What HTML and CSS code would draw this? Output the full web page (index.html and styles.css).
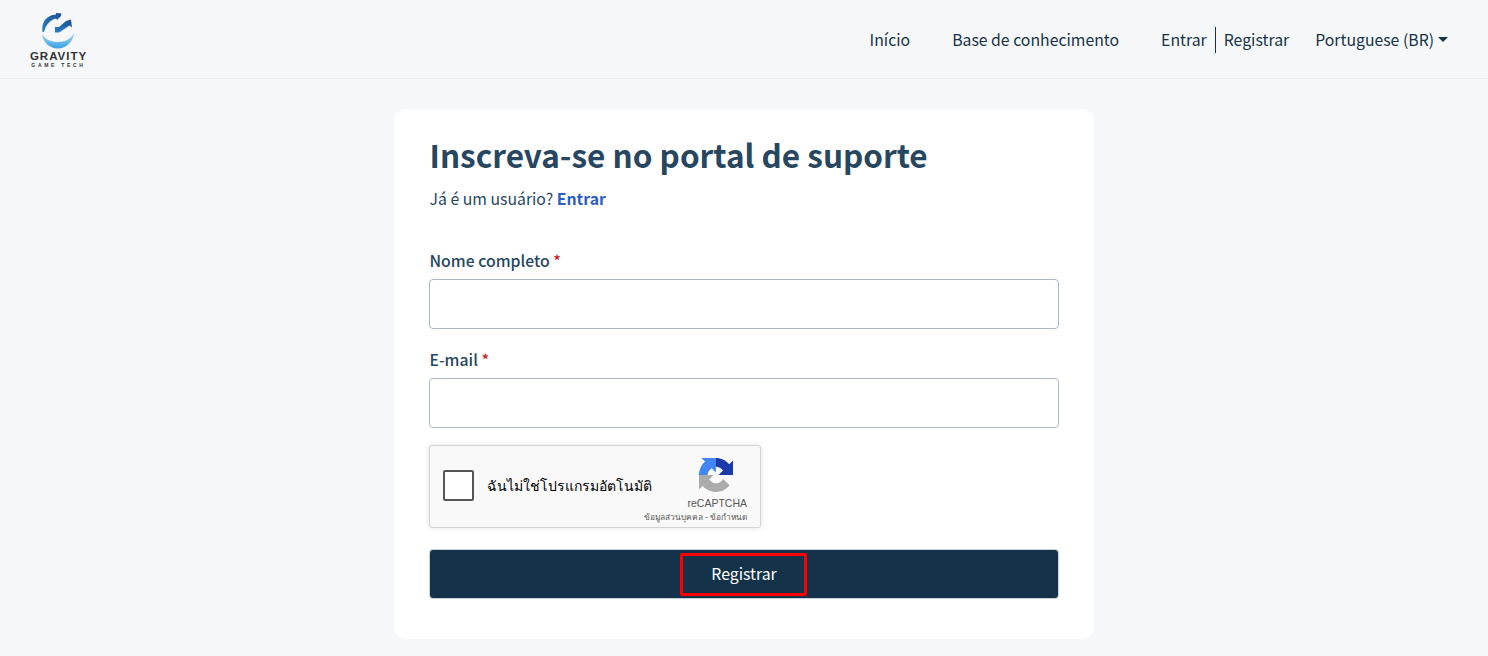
FILE: index.html
```html
<!DOCTYPE html>
<html lang="pt-BR">
<head>
<meta charset="utf-8">
<title>Inscreva-se no portal de suporte</title>
<link rel="stylesheet" href="styles.css">
</head>
<body>
<header class="topbar">
  <a class="brand" href="#">
    <svg class="brand-mark" width="40" height="38" viewBox="40 12 40 38" aria-hidden="true">
      <defs>
        <linearGradient id="bowl" x1="0" y1="0" x2="0" y2="1"><stop offset="0" stop-color="#a8dcf7"/><stop offset="1" stop-color="#3a9fe2"/></linearGradient>
        <linearGradient id="ring" x1="0" y1="1" x2="1" y2="0"><stop offset="0" stop-color="#2a7fc8"/><stop offset="1" stop-color="#1a4f92"/></linearGradient>
      </defs>
      <path d="M43 35C47 41 52 43 59 43C66 43 72 40 75.500 33.500C74 43 67 49.500 59 49.500C50 49.500 44 43 43 35Z" fill="url(#bowl)"/>
      <path d="M43.500 33C42 24 47 16 57 15.500L57 14L62.500 14.500L62 17L58 21L57 19.500C52 20.500 47 25 45 33Z" fill="url(#ring)"/>
      <path d="M56 33.500L56 28L60 28L67 22L72 20.500L73 28.500L70.500 26.500L60 33.500Z" fill="url(#ring)"/>
    </svg>
    <span class="brand-name">GRAVITY</span>
    <span class="brand-sub">GAME TECH</span>
  </a>
  <nav class="nav">
    <a class="nav-link" href="#">Início</a>
    <a class="nav-link" href="#">Base de conhecimento</a>
    <div class="auth">
      <a class="auth-link auth-entrar" href="#">Entrar</a>
      <a class="auth-link auth-registrar" href="#">Registrar</a>
    </div>
    <a class="lang" href="#">Portuguese (BR)<span class="caret"></span></a>
  </nav>
</header>

<main class="page">
  <section class="card">
    <h1 class="title">Inscreva-se no portal de suporte</h1>
    <p class="subtitle">Já é um usuário? <a class="subtitle-link" href="#">Entrar</a></p>
    <form class="form">
      <div class="field">
        <label class="label" for="nome">Nome completo <span class="req">*</span></label>
        <input class="input" id="nome" type="text">
      </div>
      <div class="field">
        <label class="label" for="email">E-mail <span class="req">*</span></label>
        <input class="input" id="email" type="text">
      </div>
      <div class="captcha">
        <span class="captcha-box"></span>
        <span class="captcha-text">ฉันไม่ใช่โปรแกรมอัตโนมัติ</span>
        <div class="captcha-brand">
          <svg class="captcha-logo" width="34" height="34" viewBox="0 0 64 64" aria-hidden="true">
            <path d="M64 31.955l-.033-1.37V4.687l-7.16 7.16C50.948 4.674 42.033.093 32.05.093c-10.400 0-19.622 4.960-25.458 12.640l11.736 11.860c1.150-2.127 2.784-3.954 4.758-5.338 2.050-1.600 4.953-2.910 8.963-2.910.484 0 .858.057 1.133.163 4.977.393 9.292 3.140 11.830 7.124l-8.306 8.307 32.293.015" fill="#1c3aa9"/>
            <path d="M31.862.002l-1.370.033H4.594l7.160 7.160C4.580 13.054-.001 21.970-.001 31.953c0 10.400 4.960 19.622 12.640 25.458l11.860-11.736c-2.127-1.150-3.954-2.784-5.338-4.758-1.600-2.050-2.910-4.953-2.910-8.963 0-.484.057-.858.163-1.133.393-4.977 3.140-9.292 7.124-11.830l8.307 8.306.015-32.293" fill="#4285f4"/>
            <path d="M.002 31.953l.033 1.370v25.898l7.160-7.160c5.860 7.173 14.775 11.754 24.760 11.754 10.400 0 19.622-4.960 25.458-12.640l-11.736-11.860c-1.150 2.127-2.784 3.954-4.758 5.338-2.050 1.600-4.953 2.910-8.963 2.910-.484 0-.858-.057-1.133-.163-4.977-.393-9.292-3.140-11.830-7.124l8.306-8.307-32.293-.015" fill="#ababab"/>
          </svg>
          <span class="captcha-name">reCAPTCHA</span>
          <span class="captcha-terms">ข้อมูลส่วนบุคคล - ข้อกำหนด</span>
        </div>
      </div>
      <button class="submit" type="button"><span class="submit-label">Registrar</span></button>
    </form>
  </section>
</main>
</body>
</html>
```
FILE: styles.css
```css
* { box-sizing: border-box; }
html, body { margin: 0; padding: 0; }
body {
  background: #f5f7f9;
  color: #183247;
  font-family: "Noto Sans CJK SC", "Noto Sans", sans-serif;
  font-size: 15.8px;
  line-height: 24px;
  overflow: hidden;
  height: 656px;
}
a { color: inherit; text-decoration: none; }

.topbar {
  height: 79px;
  border-bottom: 1px solid #ebeff3;
  display: flex;
  align-items: center;
  justify-content: space-between;
  padding: 0 40px 0 30px;
}
.brand { display: flex; flex-direction: column; align-items: center; width: 57px; color: #333; }
.brand-mark { display: block; }
.brand-name { font-family: "Liberation Sans", sans-serif; font-weight: 700; font-size: 11.5px; line-height: 10px; letter-spacing: 1px; margin-top: 2px; white-space: nowrap; }
.brand-sub { font-family: "Liberation Sans", sans-serif; font-weight: 700; font-size: 5px; line-height: 6px; letter-spacing: 2.7px; margin-top: 1px; white-space: nowrap; }

.nav { display: flex; align-items: center; margin-top: 1px; }
.nav-link { margin-right: 42px; }
.auth { display: flex; align-items: center; margin-right: 26px; }
.auth-link { display: block; line-height: 26px; }
.auth-entrar { padding-right: 8px; border-right: 1px solid #183247; }
.auth-registrar { padding-left: 8px; }
.lang { display: flex; align-items: center; }
.caret { width: 0; height: 0; margin-left: 4px; border-left: 5px solid transparent; border-right: 5px solid transparent; border-top: 5px solid #183247; }

.page { display: flex; justify-content: center; padding-top: 30px; }
.card {
  width: 700px;
  height: 530px;
  background: #fff;
  border-radius: 12px;
  padding: 23px 35px 0;
}
.title { margin: 0; padding-left: .5px; font-size: 31.500px; line-height: 44px; font-weight: 700; color: #27465f; }
.subtitle { margin: 11px 0 0; padding-left: .5px; line-height: 24px; color: #27465f; }
.subtitle-link { color: #2c5cc5; font-weight: 700; }
.form { margin-top: 38px; }
.field { margin-bottom: 19px; }
.label { display: block; padding-left: .5px; font-weight: 500; line-height: 24px; margin-bottom: 6px; color: #27465f; }
.req { color: #c82124; }
.input { display: block; width: 630px; height: 50px; border: 1px solid #a9b7c6; border-radius: 4px; background: #fff; padding: 0 12px; font: inherit; outline: none; }

.captcha {
  width: 332px;
  height: 83px;
  margin-top: -2px;
  background: #f9f9f9;
  border: 1px solid #d3d3d3;
  border-radius: 3px;
  box-shadow: 0 0 4px 1px rgba(0,0,0,.08);
  display: flex;
  align-items: center;
  padding-left: 13px;
}
.captcha-box { width: 31px; height: 31px; background: #fff; border: 2px solid #555; border-radius: 2px; flex: none; margin-bottom: 3px; }
.captcha-text { flex: 1; min-width: 0; margin-left: 13px; font-family: "Liberation Sans", "Noto Sans", sans-serif; font-size: 14px; color: #000; margin-bottom: 1px; white-space: nowrap; }
.captcha-brand { flex: none; width: 104px; margin-right: 13px; margin-top: 8px; display: flex; flex-direction: column; align-items: flex-end; }
.captcha-logo { display: block; margin: 0 14px 4px 0; }
.captcha-name { font-family: "Liberation Sans", sans-serif; font-size: 10.500px; line-height: 14px; color: #555; }
.captcha-terms { font-family: "Liberation Sans", sans-serif; font-size: 8.300px; line-height: 12px; color: #555; white-space: nowrap; margin-top: 1px; }

.submit {
  display: flex;
  align-items: center;
  justify-content: center;
  width: 630px;
  height: 50px;
  margin-top: 21px;
  background: #14334b;
  border: 1px solid #c9d2da;
  border-radius: 4px;
  color: #fff;
  font: inherit;
  padding: 0;
}
.submit-label {
  display: block;
  width: 127px;
  height: 43px;
  margin-left: -1px;
  padding-left: 1px;
  line-height: 35px;
  border: 3px solid #f00;
  border-radius: 2px;
}
```
